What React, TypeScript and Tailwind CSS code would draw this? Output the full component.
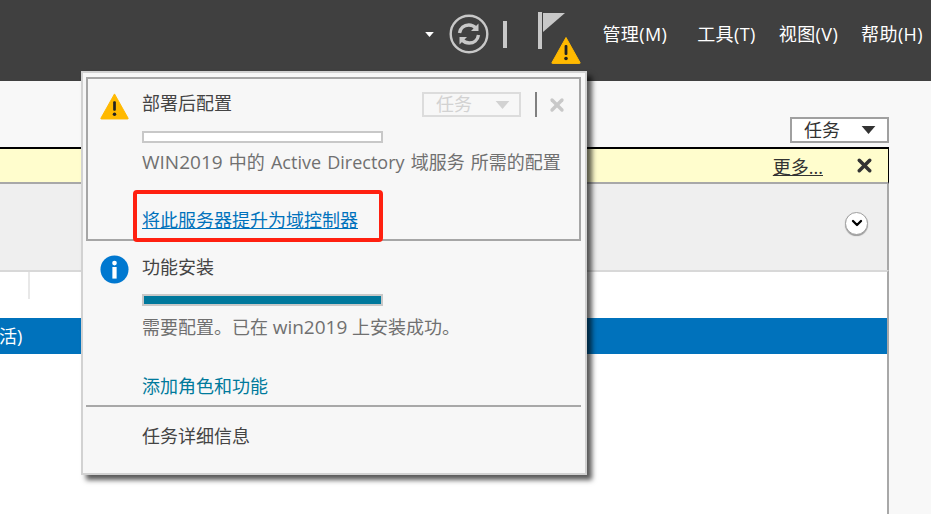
import { ChevronDown, X } from "lucide-react";

const font = { sans: "font-['Open_Sans','Noto_Sans_CJK_SC',sans-serif]" };

function Caret({ className }: { className: string }) {
  return (
    <svg viewBox="0 0 12 7" className={className}>
      <path d="M0 0h12L6 7z" fill="currentColor" />
    </svg>
  );
}

function WarningIcon({ className }: { className: string }) {
  return (
    <svg viewBox="0 0 30 28" className={className}>
      <path d="M15 1.500 29 26.500a.6.6 0 0 1-.5.9H1.500a.6.6 0 0 1-.5-.9z" fill="#ffb900" stroke="#ffb900" strokeLinejoin="round" />
      <rect x="13.600" y="9" width="2.800" height="10" rx="1" fill="#222" />
      <circle cx="15" cy="22.500" r="1.800" fill="#222" />
    </svg>
  );
}

function InfoIcon() {
  return (
    <svg viewBox="0 0 30 30" className="h-[29px] w-[29px] shrink-0">
      <circle cx="15" cy="15" r="14.500" fill="#0078d0" />
      <circle cx="15" cy="8.400" r="2.400" fill="#fff" />
      <rect x="12.800" y="12.400" width="4.400" height="12" fill="#fff" />
    </svg>
  );
}

function RefreshIcon() {
  return (
    <svg viewBox="0 0 40 40" className="h-10 w-10" fill="none" stroke="#c8c8c8">
      <circle cx="20" cy="20" r="18.300" strokeWidth="2.400" />
      <path d="M10.500 19c.8-5 4.600-8 9.300-8 3 0 5.200 1.100 7 3" strokeWidth="3.400" />
      <path d="M29.500 21c-.8 5-4.600 8-9.300 8-3 0-5.200-1.100-7-3" strokeWidth="3.400" />
      <path d="M29.500 9.500v7.500h-7.500z" fill="#c8c8c8" stroke="none" />
      <path d="M10.500 30.500v-7.500h7.500z" fill="#c8c8c8" stroke="none" />
    </svg>
  );
}

function FlagIcon() {
  return (
    <div className="relative h-[54px] w-[44px]">
      <svg viewBox="0 0 27 37" className="h-[37px] w-[27px]">
        <rect x="0" y="0" width="4" height="37" fill="#c8c8c8" />
        <path d="M5 1h22L5 20z" fill="#c8c8c8" />
      </svg>
      <WarningIcon className="absolute left-[13px] top-[24px] h-[28px] w-[30px]" />
    </div>
  );
}

function MenuBar() {
  return (
    <header className="flex h-[81px] items-center justify-end bg-[#404040] pb-[13px] pr-2 text-[18px] tracking-[0.4px] text-white">
      <Caret className="mr-[14px] h-[5px] w-[11px] text-white" />
      <RefreshIcon />
      <div className="ml-[14px] mr-[31px] h-[27px] w-1 bg-[#c8c8c8]" />
      <div className="mr-[20px] mt-[10px]">
        <FlagIcon />
      </div>
      <span className="mr-[30px]">管理(M)</span>
      <span className="mr-[23px]">工具(T)</span>
      <span className="mr-[23px]">视图(V)</span>
      <span>帮助(H)</span>
    </header>
  );
}

function Progress({ filled }: { filled?: boolean }) {
  return (
    <div className={`mt-[14px] h-[12px] w-[241px] border-2 border-[#c8c8c8] ${filled ? "bg-[#00789c]" : "bg-white"}`} />
  );
}

function Popup() {
  return (
    <div className="absolute left-[81px] top-[71px] h-[404px] w-[506px] border-2 border-[#d2d2d2] bg-[#f7f7f7] pl-[3px] pr-[4px] pt-[4px] text-[18px] shadow-[5px_5px_5px_rgba(0,0,0,0.65)]">
      <section className="relative h-[164px] border-2 border-[#a6a6a6] pl-[12px] pt-[13px]">
        <div className="flex gap-[13px]">
          <WarningIcon className="h-[28px] w-[29px] shrink-0" />
          <div>
            <div className="flex h-[25px] w-[425px] items-center justify-between">
              <h3 className="-mt-[2px] text-[#444444]">部署后配置</h3>
              <div className="flex items-center">
                <div className="flex h-[25px] w-[99px] items-center justify-between border-2 border-[#dcdcdc] pl-[12px] pr-[9px] text-[#d2d2d2]">
                  <span>任务</span>
                  <Caret className="h-[8px] w-[15px] text-[#d2d2d2]" />
                </div>
                <div className="ml-[14px] mr-[10px] h-[25px] w-[2px] bg-[#808080]" />
                <X className="h-[20px] w-[20px] text-[#c8c8c8]" strokeWidth={4} />
              </div>
            </div>
            <Progress />
            <p className="mt-[6px] h-[26px] leading-[26px] text-[#707070] [word-spacing:1.500px]">
              <span className="text-[19px]">WIN2019</span> 中的 Active Directory 域服务 所需的配置
            </p>
            <a className="mt-[32px] block leading-[26px] text-[#0072bc] underline">将此服务器提升为域控制器</a>
          </div>
        </div>
        <div className="absolute left-[45px] top-[111px] h-[52px] w-[250px] rounded-[4px] border-4 border-[#ff2010]" />
      </section>
      <section className="pl-[14px] pt-[14px]">
        <div className="flex gap-[13px]">
          <InfoIcon />
          <div>
            <h3 className="h-[25px] leading-[25px] text-[#444444]">功能安装</h3>
            <Progress filled />
            <p className="mt-[8px] h-[26px] leading-[26px] text-[#707070]">
              需要配置。已在 <span className="text-[19px]">win2019</span> 上安装成功。
            </p>
            <a className="mt-[33px] block leading-[26px] text-[#007a9c]">添加角色和功能</a>
          </div>
        </div>
      </section>
      <div className="mt-[6px] h-[2px] bg-[#a8a8a8]" />
      <div className="pl-[56px] pt-[16px] leading-[26px] text-[#444444]">任务详细信息</div>
    </div>
  );
}

export default function App() {
  return (
    <div className={`relative flex h-[514px] w-[931px] flex-col overflow-hidden bg-[#f8f8f8] ${font.sans}`}>
      <MenuBar />
      <div className="flex h-[66px] items-start justify-end pr-[42px] pt-[36px]">
        <div className="flex h-[26px] w-[99px] items-center justify-between border-2 border-[#a0a0a0] bg-white pl-[12px] pr-[11px] text-[18px] text-[#333333]">
          <span>任务</span>
          <Caret className="h-[8px] w-[15px] text-[#333333]" />
        </div>
      </div>
      <div className="flex h-[37px] w-[889px] items-center justify-end border-b-2 border-r border-t-2 border-b-[#a8a8a8] border-r-black border-t-black bg-[#fffdcd] pr-[13px] pt-[3px] text-[18px] text-[#333333]">
        <a className="mr-[31px] underline">更多...</a>
        <X className="-mt-[3px] h-[21px] w-[21px] text-[#333333]" strokeWidth={4} />
      </div>
      <div className="flex h-[86px] w-[889px] items-center justify-end border-r-2 border-r-[#a8a8a8] bg-[#efefef] pb-[8px] pr-[19px]">
        <div className="flex h-[23px] w-[23px] items-center justify-center rounded-full border border-[#a0a0a0] bg-white shadow-[0_1px_1px_rgba(0,0,0,0.35)]">
          <ChevronDown className="h-[16px] w-[16px] text-black" strokeWidth={3.500} />
        </div>
      </div>
      <div className="min-h-0 w-[889px] flex-1 border-r-2 border-t-2 border-r-[#a8a8a8] border-t-[#d8d8d8] bg-white">
        <div className="h-[27px] w-[30px] border-r-2 border-r-[#e8e8e8]" />
        <div className="mt-[19px] flex h-[36px] items-center bg-[#0072bc] text-[18px] text-white">
          <span className="-ml-px">活)</span>
        </div>
      </div>
      <Popup />
    </div>
  );
}
